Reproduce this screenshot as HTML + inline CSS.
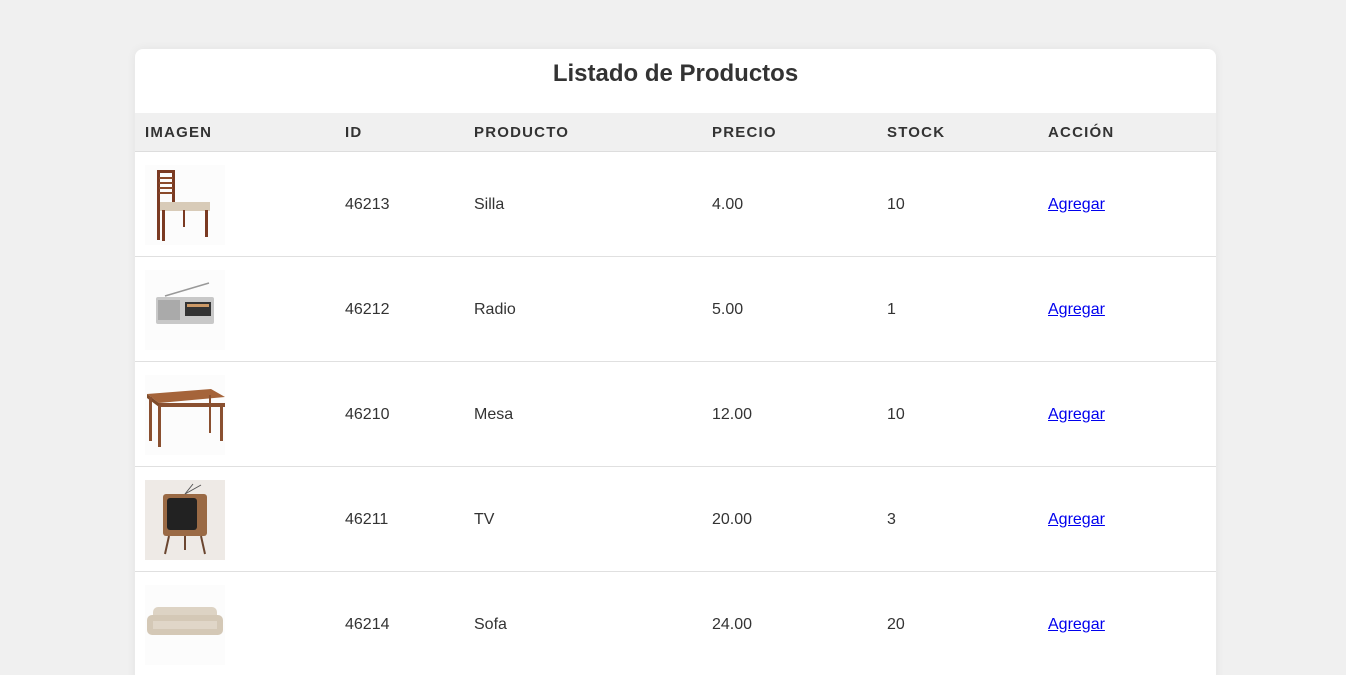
<!DOCTYPE html>
<html><head><meta charset="utf-8"><style>
*{box-sizing:border-box}
html,body{margin:0;height:675px;overflow:hidden}
body{background:#f0f0f0;font-family:"Liberation Sans",Arial,sans-serif;color:#333;width:1346px;position:relative}
.card{position:absolute;left:135px;top:49px;width:1081px;height:640px;background:#fff;border-radius:8px;box-shadow:0 0 10px rgba(0,0,0,.06);overflow:hidden}
h2{margin:0;height:64px;line-height:50px;text-align:center;font-size:24px;font-weight:bold;color:#333}
table{border-collapse:collapse;width:100%}
th{background:#f0f0f0;height:38px;text-align:left;font-size:15px;letter-spacing:1.2px;font-weight:bold;color:#333;padding:2px 10px 0;border-bottom:1px solid #ddd}
td{height:105px;padding:2px 10px 0;font-size:16px;border-bottom:1px solid #e0e0e0;vertical-align:middle}
a{color:#00e;text-decoration:underline}
.img{width:80px;height:80px;display:block;background:#fcfcfc}
</style></head><body>
<div class="card">
<h2>Listado de Productos</h2>
<table>
<tr><th style="width:200px">IMAGEN</th><th style="width:129px">ID</th><th style="width:238px">PRODUCTO</th><th style="width:175px">PRECIO</th><th style="width:161px">STOCK</th><th>ACCIÓN</th></tr>
<tr><td><svg class="img" viewBox="0 0 80 80"><rect x="12" y="5" width="18" height="3" fill="#7a3a22"/><rect x="12" y="5" width="3" height="70" fill="#7a3a22"/><rect x="27" y="5" width="3" height="35" fill="#7a3a22"/><g fill="#8a4a2a"><rect x="14" y="12" width="14" height="2"/><rect x="14" y="17" width="14" height="2"/><rect x="14" y="22" width="14" height="2"/><rect x="14" y="27" width="14" height="2"/></g><rect x="15" y="37" width="50" height="9" fill="#d8cbb8"/><rect x="17" y="45" width="3" height="31" fill="#7a3a22"/><rect x="60" y="45" width="3" height="27" fill="#7a3a22"/><rect x="38" y="45" width="2" height="17" fill="#7a3a22"/></svg></td><td>46213</td><td>Silla</td><td>4.00</td><td>10</td><td><a>Agregar</a></td></tr>
<tr><td><svg class="img" viewBox="0 0 80 80"><line x1="20" y1="26" x2="64" y2="13" stroke="#999" stroke-width="1.5"/><rect x="11" y="27" width="58" height="27" rx="2" fill="#c8c8c8"/><rect x="13" y="30" width="22" height="20" fill="#aaa"/><rect x="40" y="32" width="26" height="14" fill="#333"/><rect x="42" y="34" width="22" height="3" fill="#c96"/></svg></td><td>46212</td><td>Radio</td><td>5.00</td><td>1</td><td><a>Agregar</a></td></tr>
<tr><td><svg class="img" viewBox="0 0 80 80"><polygon points="2,19 66,14 80,22 14,28" fill="#a5643a"/><polygon points="2,19 14,28 14,32 2,23" fill="#7e4a28"/><rect x="14" y="28" width="66" height="4" fill="#8a5030"/><rect x="4" y="22" width="3" height="44" fill="#8a5030"/><rect x="13" y="30" width="3" height="42" fill="#8a5030"/><rect x="75" y="30" width="3" height="36" fill="#8a5030"/><rect x="64" y="20" width="2" height="38" fill="#8a5030"/></svg></td><td>46210</td><td>Mesa</td><td>12.00</td><td>10</td><td><a>Agregar</a></td></tr>
<tr><td><svg class="img" viewBox="0 0 80 80"><rect width="80" height="80" fill="#eeeae6"/><rect x="18" y="14" width="44" height="42" rx="3" fill="#9a6a45"/><rect x="22" y="18" width="30" height="32" rx="3" fill="#222"/><line x1="40" y1="14" x2="48" y2="4" stroke="#555"/><line x1="40" y1="14" x2="56" y2="5" stroke="#555"/><line x1="24" y1="56" x2="20" y2="74" stroke="#6b4630" stroke-width="2"/><line x1="56" y1="56" x2="60" y2="74" stroke="#6b4630" stroke-width="2"/><line x1="40" y1="56" x2="40" y2="70" stroke="#6b4630" stroke-width="2"/></svg></td><td>46211</td><td>TV</td><td>20.00</td><td>3</td><td><a>Agregar</a></td></tr>
<tr><td><svg class="img" viewBox="0 0 80 80"><rect x="8" y="22" width="64" height="14" rx="5" fill="#ddd3c4"/><rect x="2" y="30" width="76" height="20" rx="5" fill="#d4c8b6"/><rect x="8" y="36" width="64" height="8" fill="#e0d6c8"/></svg></td><td>46214</td><td>Sofa</td><td>24.00</td><td>20</td><td><a>Agregar</a></td></tr>
</table>
</div>
</body></html>
